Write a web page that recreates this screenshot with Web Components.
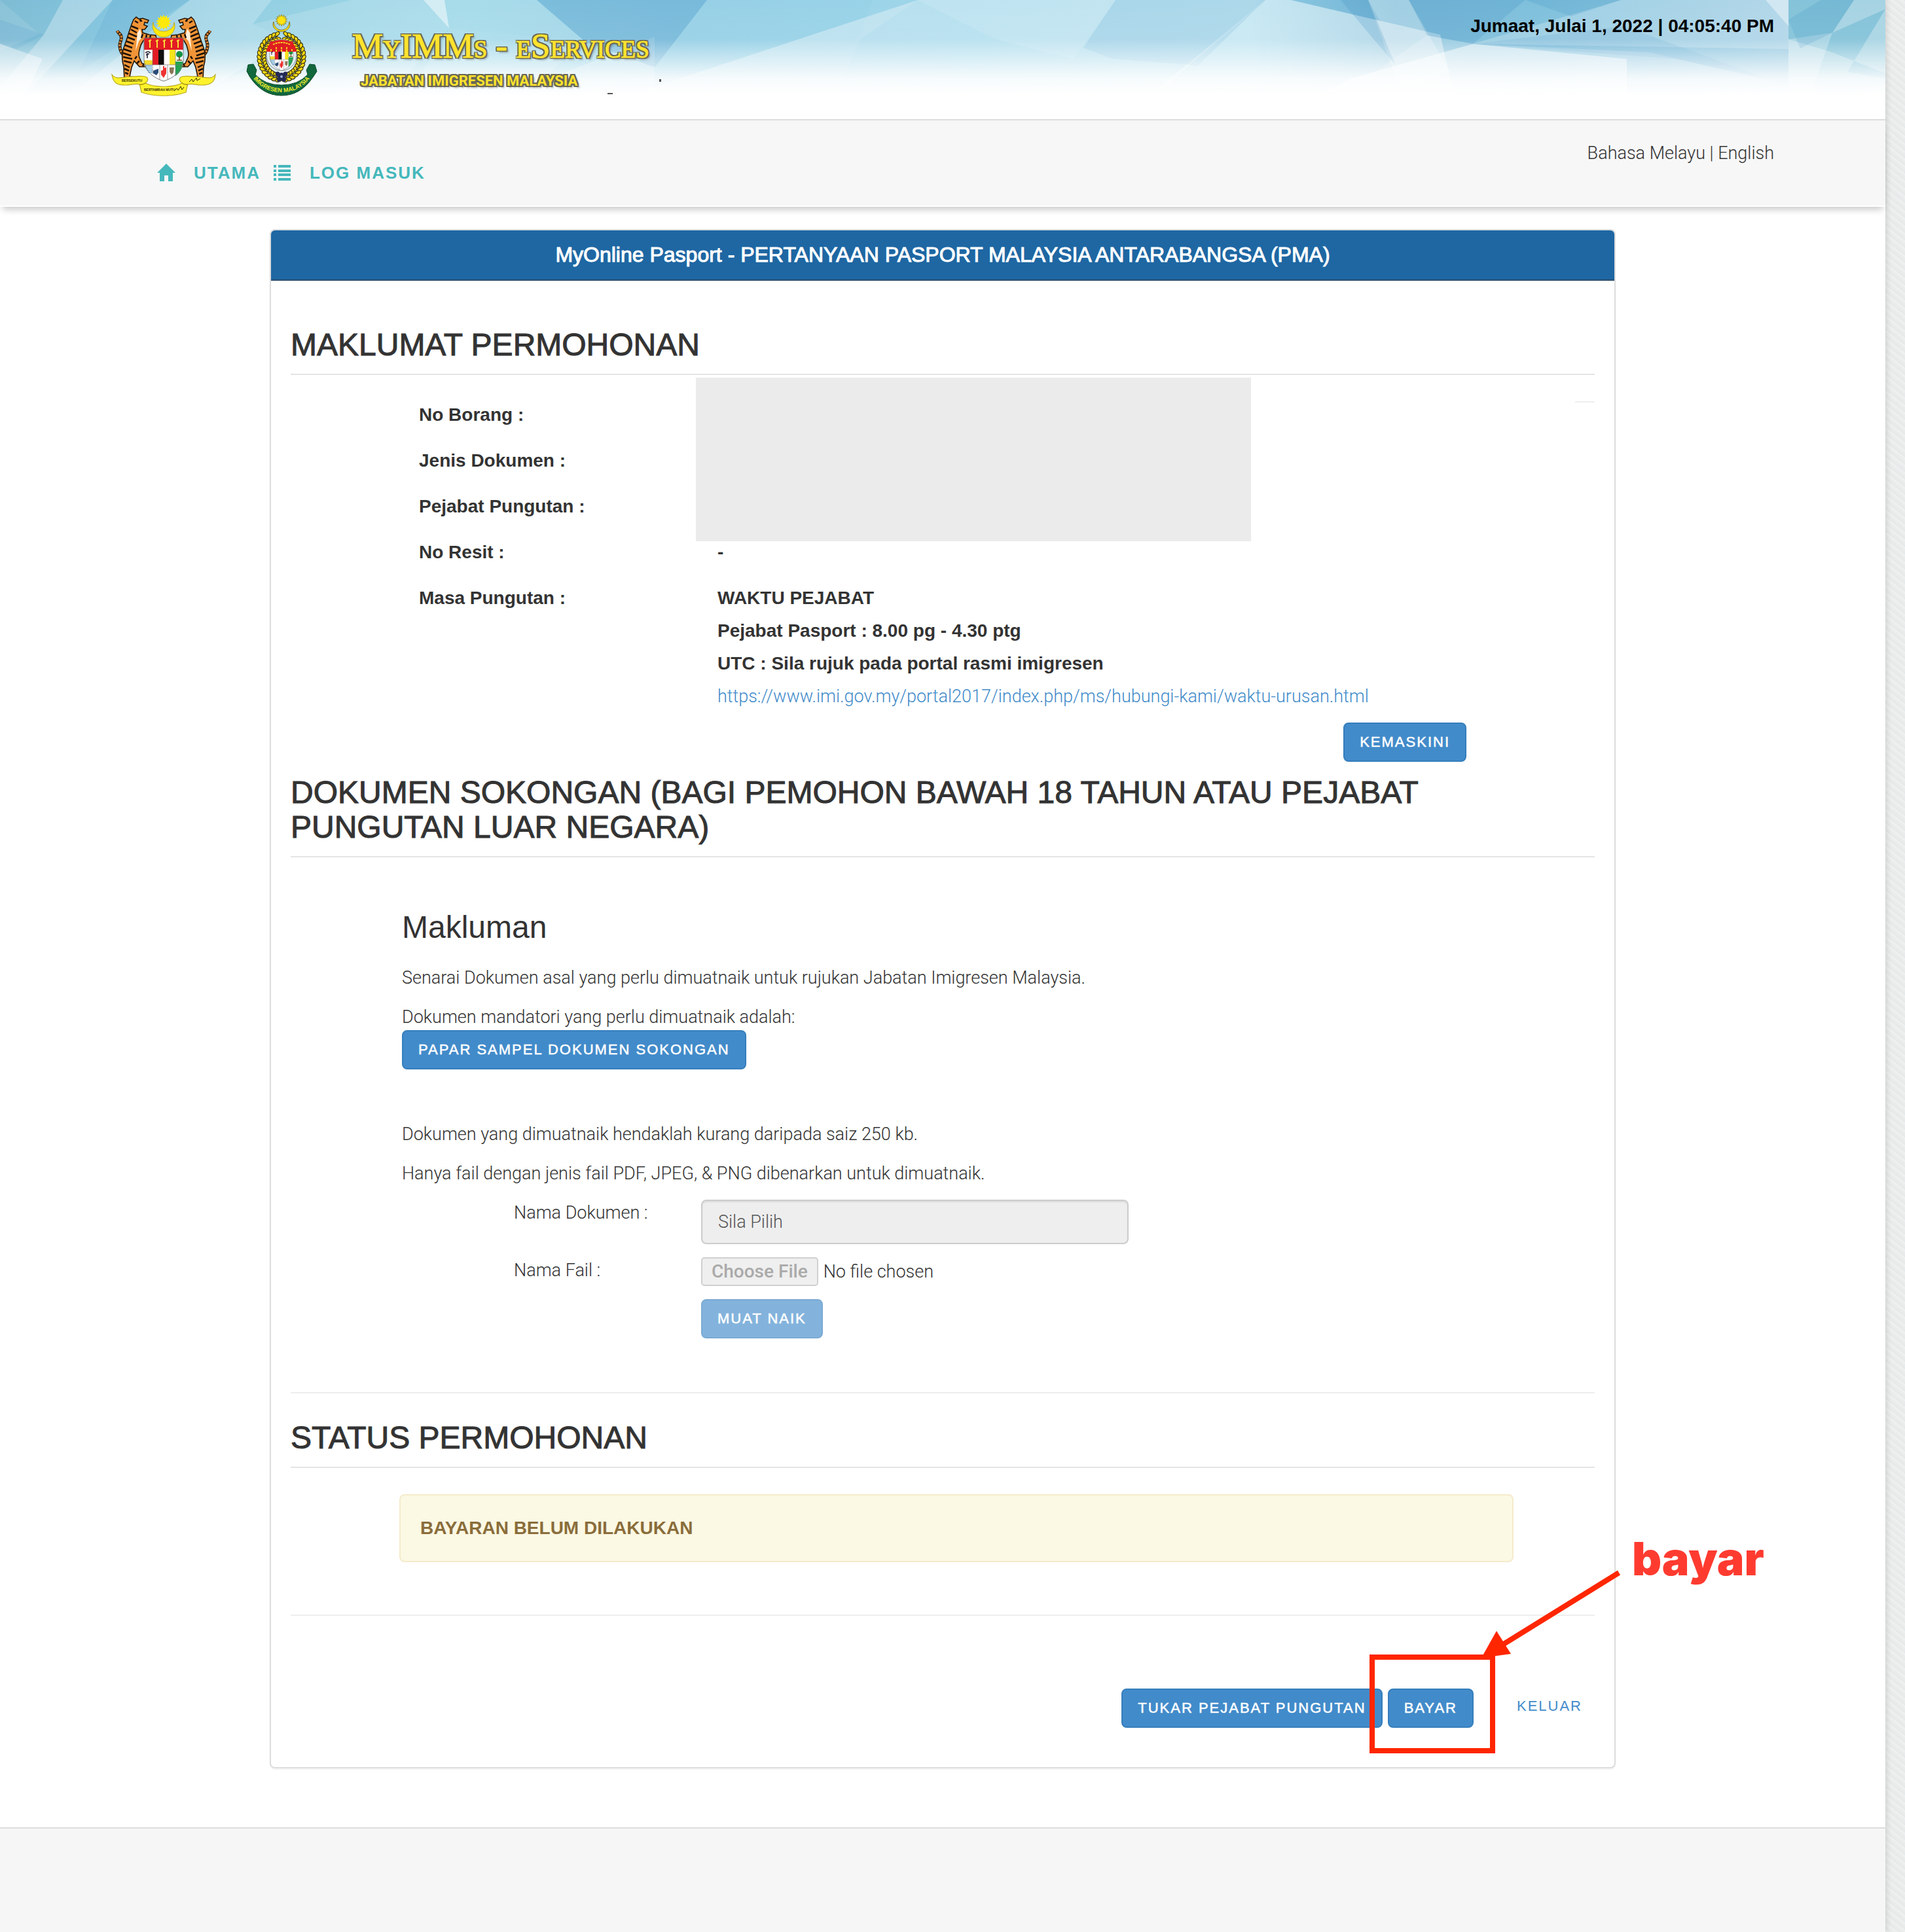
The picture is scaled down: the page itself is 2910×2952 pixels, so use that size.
<!DOCTYPE html>
<html lang="ms">
<head>
<meta charset="utf-8">
<title>MyIMMs - eServices</title>
<style>
html{height:100%}
body{margin:0;min-height:100%;display:flex;color:#333;font:300 27px/40px Roboto,"Liberation Sans",sans-serif;
background:repeating-linear-gradient(38deg,rgba(255,255,255,.2) 0 3px,rgba(200,206,206,.08) 3px 6px,rgba(255,255,255,0) 6px 9px),#eaecec}
hr{border:0;border-top:2px solid #eee;margin:0}
page-shell{--strong:"Liberation Sans",Arial,sans-serif}
</style>
</head>
<body>
<page-shell>
  <site-header></site-header>
  <site-nav></site-nav>
  <app-panel>
    <span slot="title">MyOnline Pasport - PERTANYAAN PASPORT MALAYSIA ANTARABANGSA (PMA)</span>
    <section-title>MAKLUMAT PERMOHONAN</section-title>
    <application-info></application-info>
    <section-title>DOKUMEN SOKONGAN (BAGI PEMOHON BAWAH 18 TAHUN ATAU PEJABAT PUNGUTAN LUAR NEGARA)</section-title>
    <document-upload></document-upload>
    <hr>
    <section-title class="spaced">STATUS PERMOHONAN</section-title>
    <status-alert>BAYARAN BELUM DILAKUKAN</status-alert>
    <hr>
    <panel-actions></panel-actions>
  </app-panel>
  <site-footer></site-footer>
</page-shell>

<script>
const define = (name, html) => customElements.define(name, class extends HTMLElement {
  constructor() {
    super();
    this.attachShadow({ mode: "open" }).innerHTML = html;
  }
});

define("page-shell", `
<style>
:host{display:flex;flex-direction:column;flex:1;margin-right:30px;background:#fff;box-shadow:0 0 10px rgba(0,0,0,.18)}
</style><slot></slot>`);

/* Emblem artwork */
const tiger = `
<g id="tiger">
  <path d="M37 66C28 66 24 60 23 51C22 43 27 42 25 35C24 32 21 31 19 27" transform="translate(-8 0)" fill="none" stroke="#221507" stroke-width="5"/>
  <path d="M37 66C28 66 24 60 23 51C22 43 27 42 25 35C24 32 21 31 19 27" transform="translate(-8 0)" fill="none" stroke="#d88432" stroke-width="3.2" stroke-dasharray="3 1.6"/>
  <path d="M36 10L40 6L44 9L50 8L59 11L57 15L53 14L52 18L57 20L53 25L49 25L50 30L60 33L70 34L71 39L67 41L58 38L51 42L47 49C46 55 42 60 45 68L49 77L56 78L60 72L61 78L58 82L45 82L37 73L33 83L30 97L38 98L36 101L22 101L21 82C18 72 18 60 22 50C27 38 30 23 36 10Z" fill="#f09437" stroke="#241607" stroke-width="1.6"/>
  <path d="M46 24L49 37L44 43L39 58L40 50L42 30Z" fill="#fff1dc"/>
  <path d="M33 20L43 24M32 25L41 30M29 31L41 36M27 37L38 41M25 43L36 47M23 49L34 53M21 55L33 59M20 61L32 65M20 67L34 70M21 73L33 76M22 79L30 83M22 85L29 88M23 91L28 93M50 32L48 38M56 33L55 38M62 34L61 39M41 66L38 70M45 73L41 77M52 78L50 81M38 12L43 15M46 9L47 13" stroke="#1d1208" stroke-width="2.5" fill="none"/>
  <circle cx="48" cy="12" r="1.2" fill="#111"/>
</g>`;
const shieldFields = `
<path d="M0 0H60V34C58 52 45 61 30 66C15 61 2 52 0 34Z" fill="#fff"/>
<path d="M0 0H60V18H0Z" fill="#e31c23"/>
<path d="M9 3V15M20 3V15M31 3V15M42 3V15M52 3V15M7 5L11 3M18 5L22 3M29 5L33 3M40 5L44 3M50 5L54 3" stroke="#f6dc36" stroke-width="2"/>
<path d="M13 18H22V41H13Z" fill="#e31c23"/><path d="M22 18H30.500V41H22Z" fill="#101010"/><path d="M39 18H48V41H39Z" fill="#f7e51c"/>
<path d="M5 23V31M2 23Q6 19 10 23M3 26L8 24" stroke="#223" stroke-width="1.6" fill="none"/>
<path d="M0 34H13V41H0Z" fill="#f3d92b"/><path d="M1 43H12M2 46H12M4 49H13M6 52H13" stroke="#4c9fd0" stroke-width="1.6"/>
<circle cx="54" cy="25" r="5" fill="#159447"/><path d="M54 28V34M50 34H58" stroke="#704a20" stroke-width="1.6"/>
<path d="M48 36H60C59 47 54 54 48 58Z" fill="#21a552"/>
<path d="M14 50L22 47V53L19 57L14 54Z" fill="#2a4d78"/><path d="M29 43H31V46L34 45V54L30 61L26 56V50L29 49Z" fill="#e33"/><path d="M39 45L46 45L45 53L42 56L39 52Z" fill="#8b7656"/>
<path d="M13 18V55M24 41V63M36 41V63M48 18V58M0 41H60" stroke="#777" stroke-width=".7"/>
<path d="M0 0H60V34C58 52 45 61 30 66C15 61 2 52 0 34Z" fill="none" stroke="#777" stroke-width="1"/>`;
const rays = (cx, cy, r1, r2, n) => {
  let p = "";
  for (let i = 0; i < n * 2; i++) {
    const r = i % 2 ? r1 : r2, a = Math.PI * i / n;
    p += (i ? "L" : "M") + (cx + r * Math.sin(a)).toFixed(1) + " " + (cy - r * Math.cos(a)).toFixed(1);
  }
  return p + "Z";
};
let leaves = "";
for (let i = 0; i < 17; i++) {
  const deg = 12 + i * 10;
  for (const s of [-1, 1]) for (const [r, t] of [[34, 24], [27, -24]]) {
    const a = deg * Math.PI / 180, x = 43 + s * r * Math.sin(a), y = 66 - r * 1.050 * Math.cos(a);
    leaves += `<ellipse cx="${x.toFixed(1)}" cy="${y.toFixed(1)}" rx="2.600" ry="4.600" transform="rotate(${s * (deg + 90 + t)} ${x.toFixed(1)} ${y.toFixed(1)})"/>`;
  }
}

define("national-crest", `
<style>:host{display:block}svg{display:block}</style>
<svg width="164" height="130" viewBox="0 0 164 130" role="img" aria-label="Jata Negara">
  <path d="${rays(82, 14, 8, 12, 14)}" fill="#ffe90a"/>
  <path d="M66 14A17 17 0 1 0 98 14A16 14 0 1 1 66 14Z" fill="#ffe90a" stroke="#b7a11a" stroke-width=".8"/>
  ${tiger}
  <use href="#tiger" transform="translate(164 0) scale(-1 1)"/>
  <g transform="translate(52 38)">${shieldFields}</g>
  <path d="M3 94C10 103 20 97 34 97C42 97 50 95 56 98C60 101 56 106 54 107C68 114 96 114 110 107C108 106 104 101 108 98C114 95 122 97 130 97C144 97 154 103 161 94C160 108 150 110 140 110C132 110 124 107 119 109C117 113 117 118 116 121C96 128 68 128 48 121C47 118 47 113 45 109C40 107 32 110 24 110C12 110 5 108 3 94Z" fill="#fff22d" stroke="#b9aa20" stroke-width="1.200"/>
  <path d="M45 109Q50 110 54 107M119 109Q114 110 110 107" stroke="#a08f12" stroke-width="1.500" fill="none"/>
  <g font-family="Liberation Sans" font-weight="700" font-size="5" fill="#332d05"><text x="18" y="105">BERSEKUTU</text><text x="52" y="119">BERTAMBAH MUTU</text></g>
  <path d="M121 105l4 -4l2 4l5 -6l1 4l5 -3M98 119l4 -4l2 3l4 -6l2 5l3 -4" stroke="#332d05" fill="none"/>
</svg>`);

define("immigration-crest", `
<style>:host{display:block}svg{display:block;overflow:visible}</style>
<svg width="108" height="126" viewBox="-11 0 108 126" role="img" aria-label="Imigresen Malaysia">
  <path d="${rays(43, 10, 6, 9, 14)}" fill="#ffe312" stroke="#7b6b12" stroke-width=".6"/>
  <path d="M31 12A12 13 0 1 0 55 12A13 11 0 1 1 31 12Z" fill="#ffe312" stroke="#6c6218" stroke-width=".8"/>
  <g fill="#f6d713" stroke="#2b280d" stroke-width="1.100">${leaves}</g>
  <ellipse cx="43" cy="63" rx="23" ry="24" fill="#dceef5" stroke="#888"/>
  <g transform="translate(25 42) scale(.6 .68)">${shieldFields}</g>
  <path d="M20 58Q22 40 43 40Q64 40 66 58Z" fill="#e01d20"/>
  <path d="M27 54V58M35 51V58M43 51V58M51 51V58M59 54V58M30 47Q43 41 56 47" stroke="#f4cf26" stroke-width="2" stroke-dasharray="3 1" fill="none"/>
  <g fill="#242a55"><circle cx="43" cy="96" r="6"/><circle cx="37" cy="92" r="3.500"/><circle cx="49" cy="92" r="3.500"/><circle cx="39" cy="101" r="3"/><circle cx="47" cy="101" r="3"/></g>
  <circle cx="43" cy="96" r="2" fill="#9bb0d8"/>
  <path d="M-10 88L-8 78L0 77L5 86L3 93Q18 109 43 109Q68 109 83 93L81 86L86 77L94 78L97 88L91 97Q72 125 43 125Q14 125 -5 97Z" fill="#11683c" stroke="#0c4a2b"/>
  <path id="arc" d="M-4 94Q14 120 43 120Q72 120 90 94" fill="none"/>
  <text font-family="Liberation Sans" font-weight="700" font-size="9" fill="#f4f02c" text-anchor="middle"><textPath href="#arc" startOffset="50%">IMIGRESEN MALAYSIA</textPath></text>
</svg>`);

define("site-header", `
<style>
:host{display:grid;border-bottom:2px solid #ddd}
.art{grid-area:1/1;width:100%;height:182px;display:block}
.bar{grid-area:1/1;z-index:1;display:flex;align-items:flex-start;padding:0 170px 0 168px;height:182px}
national-crest{margin-top:20px}
immigration-crest{margin:21px 0 0 44px}
.brand{margin:40px auto 0 54px;color:#ffe32e;
text-shadow:2px 0 #686753,-2px 0 #686753,0 2px #686753,0 -2px #686753,2px 2px #686753,-2px 2px #686753,2px -2px #686753,-2px -2px #686753,3px 3px 3px rgba(60,60,60,.5)}
.brand b{display:block;font:400 53px/60px "Liberation Serif",serif;font-variant:small-caps;-webkit-text-stroke:1px #ffe32e}
.brand span{display:block;margin-left:13px;font:700 22px/48px Roboto,"Liberation Sans",sans-serif}
time{margin-top:20px;font:700 28px/40px var(--strong);color:#000}
</style>
<svg class="art" viewBox="0 0 2880 182" preserveAspectRatio="xMinYMin slice" aria-hidden="true">
  <defs>
    <linearGradient id="base"><stop offset="0" stop-color="#7dbcd3"/><stop offset=".06" stop-color="#82c4de"/><stop offset=".14" stop-color="#92cfe2"/><stop offset=".26" stop-color="#9fd8e8"/><stop offset=".38" stop-color="#97d0e6"/><stop offset=".52" stop-color="#98d3e8"/><stop offset=".7" stop-color="#9fd7ea"/><stop offset=".78" stop-color="#7dbcd8"/><stop offset=".86" stop-color="#7fc0dc"/><stop offset="1" stop-color="#9acbe2"/></linearGradient>
    <linearGradient id="fade" x2="0" y2="1"><stop offset="0" stop-color="#fff" stop-opacity="0"/><stop offset=".33" stop-color="#fff" stop-opacity=".06"/><stop offset=".5" stop-color="#fff" stop-opacity=".48"/><stop offset=".66" stop-color="#fff" stop-opacity=".88"/><stop offset=".8" stop-color="#fff"/></linearGradient>
    <g id="tile">
      <rect width="2732" height="182" fill="url(#base)"/>
      <g fill="#fff">
        <path d="M0 0L60 52L0 78Z" opacity=".1"/><path d="M96 0H172L4 182H-40L67 53Z" opacity=".3"/>
        <path d="M0 67L65 90L20 182H0Z" opacity=".4"/><path d="M290 0H415L386 37L440 60L250 182H60Z" opacity=".24"/>
        <path d="M386 37L536 0H647L686 43L560 182H250L446 63Z" opacity=".16"/>
        <path d="M647 0H679L686 43Z" opacity=".55"/><path d="M686 43L893 63L760 182H600Z" opacity=".14"/>
        <path d="M679 0H820L893 63L686 43Z" opacity=".1"/><path d="M1000 56L840 120L1000 182Z" opacity=".25"/>
        <path d="M1402 0H1933L1720 182H850Z" opacity=".3"/><path d="M1333 0H1402L1310 62Z" opacity=".05"/>
        <path d="M1402 0L1315 60L1260 182H850Z" opacity=".08"/><path d="M1402 0H1704L1640 90L1520 60Z" opacity=".12"/>
        <path d="M1933 0H1972L2200 53L2230 182H1712Z" opacity=".42"/><path d="M2090 0H2152L2215 110L2140 140Z" opacity=".28"/>
        <path d="M2063 120L2250 67L2485 90V182H1950Z" opacity=".6"/>
        <path d="M2476 0H2697L2732 40V75L2250 67Z" opacity=".24"/>
        <path d="M2485 90L2250 67L2520 80L2732 130V182H2480Z" opacity=".22"/><path d="M2697 0H2732V40Z" opacity=".55"/>
        <path d="M2180 54L2250 67L2100 110Z" opacity=".2"/>
      </g>
      <g fill="#3d8fc4">
        <path d="M0 30L67 53L25 75L0 66Z" opacity=".16"/><path d="M172 0H290L120 110Z" opacity=".14"/>
        <path d="M820 0H1080L1000 103L893 63Z" opacity=".34"/>
        <path d="M1704 0H1933L1830 100L1700 90L1655 73Z" opacity=".12"/>
        <path d="M1972 0H2090L2108 32Z" opacity=".16"/><path d="M2048 0H2090L2132 100Z" opacity=".22"/>
        <path d="M2152 0H2330L2250 67L2180 54Z" opacity=".24"/><path d="M2330 0H2476L2400 25Z" opacity=".2"/>
        <path d="M2250 67L2480 40L2700 120L2560 90Z" opacity=".14"/>
      </g>
    </g>
  </defs>
  <use href="#tile"/>
  <g transform="translate(2732 0)">
    <rect width="148" height="182" fill="#84c3d9"/>
    <path d="M0 60L67 50L20 182H0ZM100 0H148V14L67 50Z" fill="#fff" opacity=".28"/>
    <path d="M0 60L67 80L148 112V182H0ZM148 14L90 110L148 120Z" fill="#fff" opacity=".3"/>
    <path d="M0 30L50 0H100L67 50L18 74Z" fill="#3d8fc4" opacity=".2"/>
  </g>
  <rect width="2880" height="182" fill="url(#fade)"/>
  <path d="M1007 121h3v4h-3zM928 142h8v2h-8z" fill="#555"/>
</svg>
<div class="bar">
  <national-crest></national-crest>
  <immigration-crest></immigration-crest>
  <div class="brand"><b>MyIMMs - eServices</b><span>JABATAN IMIGRESEN MALAYSIA</span></div>
  <time>Jumaat, Julai 1, 2022 | 04:05:40 PM</time>
</div>`);

define("site-nav", `
<style>
:host{display:flex;justify-content:space-between;align-items:flex-start;height:130px;padding:0 170px 0 240px;background:#f7f7f7;border-bottom:2px solid #fff;box-shadow:0 8px 10px -4px rgba(0,0,0,.22)}
nav{display:flex;gap:20px;margin-top:60px}
nav a{display:flex;align-items:center;gap:28px;color:#45b8bc;font:700 26px/40px var(--strong);letter-spacing:2px;text-decoration:none}
.lang{margin-top:30px}
.lang a{color:#333;text-decoration:none}
</style>
<nav>
  <a href="#"><svg width="28" height="28" viewBox="0 0 28 28" fill="currentColor" aria-hidden="true"><path d="M14 0L28 14H24V27H17V18H11V27H4V14H0Z"/></svg>UTAMA</a>
  <a href="#"><svg width="27" height="26" viewBox="0 0 27 26" fill="currentColor" aria-hidden="true"><path d="M0 1h4v4H0zM7 1h19v4H7zM0 8h4v4H0zM7 8h19v4H7zM0 14h4v4H0zM7 14h19v4H7zM0 21h4v4H0zM7 21h19v4H7z"/></svg>LOG MASUK</a>
</nav>
<div class="lang"><a href="#">Bahasa Melayu</a> | <a href="#">English</a></div>`);

define("app-panel", `
<style>
:host{display:block;box-sizing:border-box;width:100%;max-width:2056px;margin:34px auto 90px;border:2px solid #ddd;border-radius:8px;background:#fff;box-shadow:0 2px 2px rgba(0,0,0,.05)}
header{padding:17px 30px 18px;border-bottom:2px solid #2b4f6e;border-radius:6px 6px 0 0;background:#1e67a3;color:#fff;text-align:center;font:400 32px/40px var(--strong);-webkit-text-stroke:1px}
.body{padding:71px 30px 60px}
</style>
<header><slot name="title"></slot></header>
<div class="body"><slot></slot></div>`);

define("section-title", `
<style>
:host{display:block}
:host(.spaced){margin-top:41px}
h2{margin:0;padding-bottom:18px;border-bottom:2px solid #e5e5e5;font:400 48px/53px var(--strong);-webkit-text-stroke:1px}
</style><h2><slot></slot></h2>`);

customElements.define("action-button", class extends HTMLElement {
  constructor() {
    super();
    this.attachShadow({ mode: "open" }).innerHTML = `
<style>
:host{display:inline-block;vertical-align:top}
button{display:block;height:60px;padding:0 23px;border:2px solid #357ebd;border-radius:8px;background:#428bca;color:#fff;font:400 22px/56px var(--strong);letter-spacing:2px;-webkit-text-stroke:.5px}
button:disabled{opacity:.65}
</style><button type="button"><slot></slot></button>`;
  }
  connectedCallback() {
    this.shadowRoot.querySelector("button").disabled = this.hasAttribute("disabled");
  }
});

define("info-row", `
<style>
:host{display:grid;grid-template-columns:456px 1fr;font:700 28px/40px var(--strong)}
div{display:flex;flex-direction:column;gap:10px}
</style><slot name="label"></slot><div><slot></slot></div>`);

define("application-info", `
<style>
:host{display:block;position:relative;padding:41px 196px 20px 196px}
.rows{display:flex;flex-direction:column;gap:30px}
.redacted{position:absolute;left:619px;top:4px;width:848px;height:250px;background:#ebebeb}
.mark{position:absolute;right:0;top:40px;width:30px;border-top:2px solid #eee}
a{color:#428bca;text-decoration:none;font:300 27px/40px Roboto,sans-serif}
.end{display:flex;justify-content:flex-end;margin-top:20px}
</style>
<div class="rows">
  <info-row><span slot="label">No Borang :</span></info-row>
  <info-row><span slot="label">Jenis Dokumen :</span></info-row>
  <info-row><span slot="label">Pejabat Pungutan :</span></info-row>
  <info-row><span slot="label">No Resit :</span><span>-</span></info-row>
  <info-row><span slot="label">Masa Pungutan :</span><span>WAKTU PEJABAT</span><span>Pejabat Pasport : 8.00 pg - 4.30 ptg</span><span>UTC : Sila rujuk pada portal rasmi imigresen</span><a href="#">https://www.imi.gov.my/portal2017/index.php/ms/hubungi-kami/waktu-urusan.html</a></info-row>
</div>
<div class="end"><action-button>KEMASKINI</action-button></div>
<div class="redacted"></div><div class="mark"></div>`);

define("document-upload", `
<style>
:host{display:block;padding:80px 170px 82px}
h3{margin:0 0 31px;font:400 48px/53px var(--strong)}
p{margin:0 0 20px}
.tight{margin:0}
.sample{display:block;margin-bottom:79px}
form{display:grid;grid-template-columns:286px 653px;gap:20px 0;margin-left:171px}
label{height:40px}
select{box-sizing:border-box;width:100%;height:68px;margin:0;padding:0 24px;appearance:none;border:2px solid #ccc;border-radius:8px;background:#eee;color:#555;opacity:1;font:300 27px/40px Roboto,sans-serif;box-shadow:inset 0 2px 2px rgba(0,0,0,.075)}
input{height:44px;color:#333;font:300 27px/40px Roboto,sans-serif}
input::file-selector-button{box-sizing:border-box;height:44px;margin:0 8px 0 0;padding:0 14px;border:2px solid #d0d0d0;border-radius:5px;background:#efefef;color:#aaa;font:500 28px/36px Roboto,sans-serif}
action-button{grid-column:2}
</style>
<h3>Makluman</h3>
<p>Senarai Dokumen asal yang perlu dimuatnaik untuk rujukan Jabatan Imigresen Malaysia.</p>
<p class="tight">Dokumen mandatori yang perlu dimuatnaik adalah:</p>
<action-button class="sample">PAPAR SAMPEL DOKUMEN SOKONGAN</action-button>
<p>Dokumen yang dimuatnaik hendaklah kurang daripada saiz 250 kb.</p>
<p>Hanya fail dengan jenis fail PDF, JPEG, &amp; PNG dibenarkan untuk dimuatnaik.</p>
<form>
  <label for="doc">Nama Dokumen :</label>
  <select id="doc" disabled><option>Sila Pilih</option></select>
  <label for="file">Nama Fail :</label>
  <input id="file" type="file" disabled>
  <action-button disabled>MUAT NAIK</action-button>
</form>`);

define("status-alert", `
<style>
:host{display:block;margin:40px 124px 80px 166px;padding:30px;border:2px solid #f5ebcc;border-radius:8px;background:#fbf8e3;color:#8a6d3b;font:700 28px/40px var(--strong)}
</style><slot></slot>`);

define("pay-callout", `
<style>
:host{position:absolute;left:-28px;top:-270px;pointer-events:none}
svg{display:block}
text{font:900 70px Inter,sans-serif}
</style>
<svg width="680" height="380" viewBox="0 -40 680 380">
  <path d="M4 182H188V325H4Z" fill="none" stroke="#ff2600" stroke-width="8"/>
  <path d="M381 53L205 162" stroke="#ff2600" stroke-width="8"/>
  <path d="M171 183L194 142L216 177Z" fill="#ff2600"/>
  <text x="401" y="57" fill="#ff3b30">bayar</text>
</svg>`);

define("panel-actions", `
<style>
:host{display:flex;justify-content:flex-end;align-items:flex-start;margin-top:111px;gap:8px;padding-right:19px}
.pay{position:relative}
a{margin-left:58px;color:#428bca;text-decoration:none;font:400 22px/54px var(--strong);letter-spacing:2px}
</style>
<action-button>TUKAR PEJABAT PUNGUTAN</action-button>
<div class="pay"><action-button>BAYAR</action-button><pay-callout></pay-callout></div>
<a href="#">KELUAR</a>`);

define("site-footer", `
<style>:host{display:block;flex:1;min-height:140px;border-top:2px solid #ddd;background:#f6f6f6}</style>`);
</script>
</body>
</html>
